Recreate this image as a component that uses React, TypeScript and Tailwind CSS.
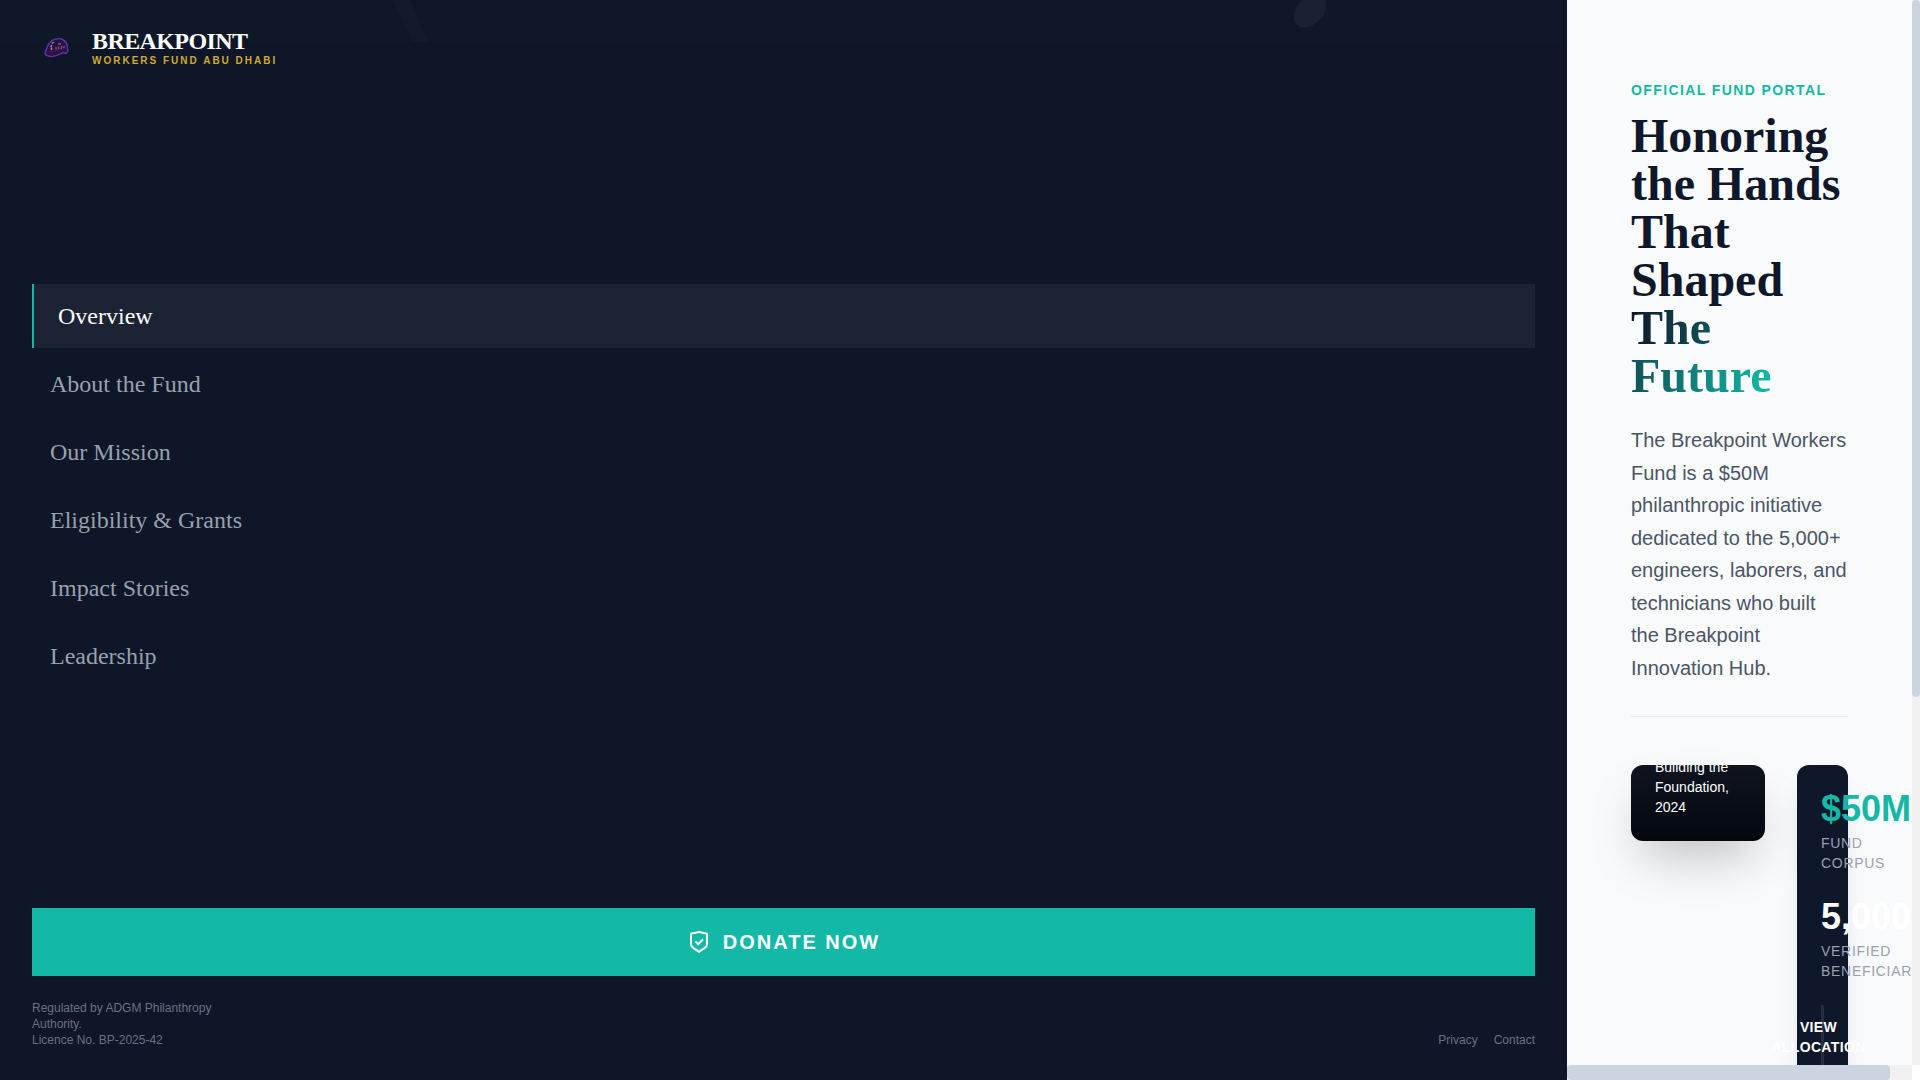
const NAV_ITEMS = [
  { id: "overview", label: "Overview" },
  { id: "about", label: "About the Fund" },
  { id: "mission", label: "Our Mission" },
  { id: "eligibility", label: "Eligibility & Grants" },
  { id: "impact", label: "Impact Stories" },
  { id: "leadership", label: "Leadership" },
];

const STATS = [
  { value: "$50M", label: "Fund Corpus", color: "text-[#14b8a6]" },
  { value: "5,000+", label: "Verified Beneficiaries", color: "text-white" },
];

function HelmetLogo() {
  return (
    <svg viewBox="0 0 48 48" className="size-12 shrink-0" aria-hidden="true">
      <path
        d="M13 28.5C15 26 14.5 23 17 19.5C20 15 26 13.5 30.5 15.5C34.5 17.5 35.5 21 35.5 24.5C36.5 26 35.8 28 34 29.5L31.5 28.5C28 30 25 32 20 32.5C17 32.5 12.5 31.5 13 28.5Z"
        fill="#2c1240"
        stroke="#5636ad"
        strokeWidth="1.4"
      />
      <path d="M15.5 28C21 28.5 25 25 33 24.5" fill="none" stroke="#3b1850" strokeWidth="1.5" />
      <path d="M20 19.5l1.5-1.5M19 23l.5-2M19.5 26v-2.5" stroke="#a58ca8" strokeWidth="1.5" />
      <path d="M24 25.5v-2.5M26.5 25v-2.5M29 25l1-3M32 24v-2M26 20h3" stroke="#7b5a80" strokeWidth="1.3" />
    </svg>
  );
}

function ShieldIcon() {
  return (
    <svg viewBox="0 0 24 24" className="size-6" fill="currentColor" aria-hidden="true">
      <path d="M12 1l8.217 1.826a1 1 0 0 1 .783.976v9.987a6 6 0 0 1-2.672 4.992L12 23l-6.328-4.219A6 6 0 0 1 3 13.79V3.802a1 1 0 0 1 .783-.976L12 1zm0 2.049L5 4.604v9.185a4 4 0 0 0 1.781 3.328L12 20.597l5.219-3.48A4 4 0 0 0 19 13.79V4.604L12 3.05z" />
      <path d="M8.4 11.4l2.8 2.7 4.8-4.8" fill="none" stroke="currentColor" strokeWidth="2" />
    </svg>
  );
}

// Faint texture behind the top of the menu
function Backdrop() {
  return (
    <div className="absolute inset-0 overflow-hidden pointer-events-none" aria-hidden="true">
      <svg className="w-full h-[42px]">
        <rect width="100%" height="42" fill="#121d29" opacity="0.35" />
        <path d="M392 0h18l18 42h-14z" fill="#1b2635" opacity="0.2" />
        <ellipse cx="1310" cy="11" rx="19" ry="13" fill="#1a2332" opacity="0.9" transform="rotate(-45 1310 11)" />
      </svg>
    </div>
  );
}

function Menu() {
  return (
    <aside className="relative flex-1 min-w-0 bg-[#0e1628]">
      <Backdrop />
      <div className="relative flex flex-col h-full p-8">
        <header className="flex items-center gap-3 h-8">
          <HelmetLogo />
          <div>
            <div className="font-['Liberation_Serif',serif] text-2xl leading-6 font-bold tracking-tight text-white">
              BREAKPOINT
            </div>
            <div className="text-[10px] leading-[15px] font-bold tracking-[2px] uppercase text-[#cda936]">
              Workers Fund Abu Dhabi
            </div>
          </div>
        </header>

        <nav className="flex flex-col gap-1 my-auto font-['Liberation_Serif',serif] text-2xl">
          {NAV_ITEMS.map((item, i) => (
            <a
              key={item.id}
              href={`#${item.id}`}
              className={
                i === 0
                  ? "border-l-2 border-[#14b8a6] bg-white/6 py-4 px-6 text-white"
                  : "border-l-2 border-transparent py-4 px-4 text-gray-400"
              }
            >
              {item.label}
            </a>
          ))}
        </nav>

        <button className="flex items-center justify-center gap-3 w-full py-5 bg-[#14b8a6] text-white text-xl font-bold tracking-widest uppercase">
          <ShieldIcon />
          Donate Now
        </button>

        <footer className="flex items-end justify-between mt-6 text-xs text-gray-500">
          <p className="w-50">
            Regulated by ADGM Philanthropy Authority.
            <br />
            Licence No. BP-2025-42
          </p>
          <div className="flex gap-4">
            <a href="#privacy">Privacy</a>
            <a href="#contact">Contact</a>
          </div>
        </footer>
      </div>
    </aside>
  );
}

function Overview() {
  return (
    <main className="flex-1 min-w-0 overflow-hidden px-16 pt-20">
      <div className="border-b border-gray-200 pb-8">
        <p className="mb-3 text-sm font-bold tracking-widest uppercase text-[#14b8a6]">
          Official Fund Portal
        </p>
        <h1 className="mb-6 font-['Liberation_Serif',serif] text-5xl font-bold text-[#0f172a]">
          Honoring the Hands That Shaped{" "}
          <span className="bg-linear-to-r/srgb from-[#0f172a] to-[#14b8a6] bg-clip-text text-transparent">
            The Future
          </span>
        </h1>
        <p className="text-xl leading-relaxed text-gray-600">
          The Breakpoint Workers Fund is a $50M philanthropic initiative dedicated to the 5,000+
          engineers, laborers, and technicians who built the Breakpoint Innovation Hub.
        </p>
      </div>

      <div className="flex items-start gap-8 mt-12">
        <figure className="flex items-end flex-1 h-19 p-6 overflow-hidden rounded-xl bg-linear-to-b from-[#0f1520] to-[#04070e] shadow-2xl">
          <figcaption className="text-sm text-white">Building the Foundation, 2024</figcaption>
        </figure>

        {/* Content is wider than the card and spills out of it */}
        <section className="flex flex-col gap-6 w-[51px] h-100 shrink-0 p-6 rounded-xl bg-[#0f172a] shadow-xl">
          {STATS.map((stat) => (
            <div key={stat.label}>
              <div className={`text-4xl font-bold ${stat.color}`}>{stat.value}</div>
              <div className="mt-1 text-sm tracking-wider uppercase text-gray-400">{stat.label}</div>
            </div>
          ))}
          <button className="flex justify-center w-full py-3 rounded bg-white/10 text-sm font-bold tracking-wide uppercase text-white">
            <span className="pr-2">View Allocation</span>
          </button>
        </section>
      </div>
    </main>
  );
}

export default function App() {
  return (
    <div className="flex h-screen overflow-hidden font-['Liberation_Sans',sans-serif]">
      <Menu />
      <div className="flex flex-col w-[353px] shrink-0 bg-[#f9fafc]">
        <div className="flex flex-1 min-h-0">
          <Overview />
          <div className="w-2 shrink-0 bg-[#f1f1f1]">
            <div className="h-[65.4%] rounded bg-[#cbd5e1]" />
          </div>
        </div>
        <div className="h-[15px] pr-2 bg-white">
          <div className="h-full bg-[#f1f1f1]">
            <div className="h-full w-[93.7%] rounded bg-[#cbd5e1]" />
          </div>
        </div>
      </div>
    </div>
  );
}
